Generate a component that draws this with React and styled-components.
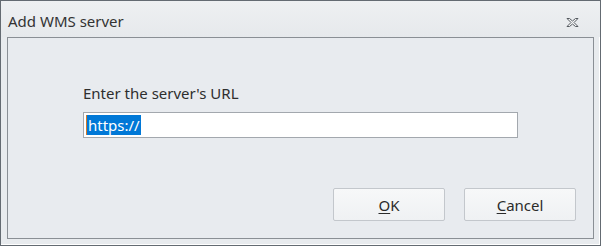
import React from 'react';
import styled, { createGlobalStyle } from 'styled-components';

const GlobalStyle = createGlobalStyle`
  html, body {
    margin: 0;
    padding: 0;
    background: #e8ebee;
  }
  * {
    box-sizing: border-box;
  }
`

const Window = styled.div`
  width: 601px;
  height: 246px;
  display: flex;
  flex-direction: column;
  border: 1px solid #646b72;
  box-shadow: inset -1px -1px 0 #ffffff;
  background: #e8ebee;
  padding: 0 6px 6px 6px;
  font-family: "Noto Sans", "Open Sans", sans-serif;
  color: #2b2b2b;
`

const TitleBar = styled.div`
  height: 36px;
  display: flex;
  align-items: center;
  justify-content: space-between;
  margin: 0 -6px;
  padding: 4px 0 0 7px;
  background: linear-gradient(#eef0f2, #e6e9ec);
`

const Title = styled.div`
  font-size: 15px;
  color: #333;
`

const CloseBtn = styled.div`
  width: 14px;
  height: 12px;
  display: flex;
  align-items: center;
  justify-content: center;
  margin-right: 21px;
  margin-top: 3px;
`

const Panel = styled.div`
  flex: 1;
  display: flex;
  flex-direction: column;
  border: 1px solid #8a8f95;
  background: #e8ebef;
  padding: 45px 17px 17px 75px;
`

const Label = styled.div`
  font-size: 15px;
  line-height: 20px;
  color: #2e2e2e;
  margin-bottom: 9px;
`

const TextBox = styled.div`
  width: 435px;
  height: 26px;
  border: 1px solid #a3a8ae;
  background: #fff;
  display: flex;
  align-items: center;
  padding-left: 2px;
`

const Selected = styled.span`
  background: #0078d7;
  color: #fff;
  font-size: 15px;
  line-height: 20px;
  padding: 0 1px 0 1px;
  border-left: 1px solid #d07a2a;
`

const Buttons = styled.div`
  margin-top: auto;
  display: flex;
  justify-content: flex-end;
  gap: 19px;
`

const Button = styled.div`
  width: 112px;
  height: 33px;
  border: 1px solid #c3c7cc;
  border-radius: 2px;
  background: linear-gradient(#f7f8f9, #eff1f3);
  display: flex;
  align-items: center;
  justify-content: center;
  font-size: 15px;
  color: #2b2b2b;
  u {
    text-decoration: underline;
    text-underline-offset: 2px;
  }
`

const CloseIcon = () => (
  <svg width="13" height="11" viewBox="0 0 13 11">
    <path
      d="M1 1.5 L3.5 1.5 L6.5 4 L9.5 1.5 L12 1.5 L8 5.5 L12 9.5 L9.5 9.5 L6.5 7 L3.5 9.5 L1 9.5 L5 5.5 Z"
      fill="#f4f5f6"
      stroke="#555a60"
      strokeWidth="1"
      strokeLinejoin="miter"
    />
  </svg>
)

const App = () => {
  return (
    <>
      <GlobalStyle />
      <Window>
        <TitleBar>
          <Title>Add WMS server</Title>
          <CloseBtn><CloseIcon /></CloseBtn>
        </TitleBar>
        <Panel>
          <Label>Enter the server's URL</Label>
          <TextBox>
            <Selected>https://</Selected>
          </TextBox>
          <Buttons>
            <Button><u>O</u>K</Button>
            <Button><u>C</u>ancel</Button>
          </Buttons>
        </Panel>
      </Window>
    </>
  );
}

export default App;
